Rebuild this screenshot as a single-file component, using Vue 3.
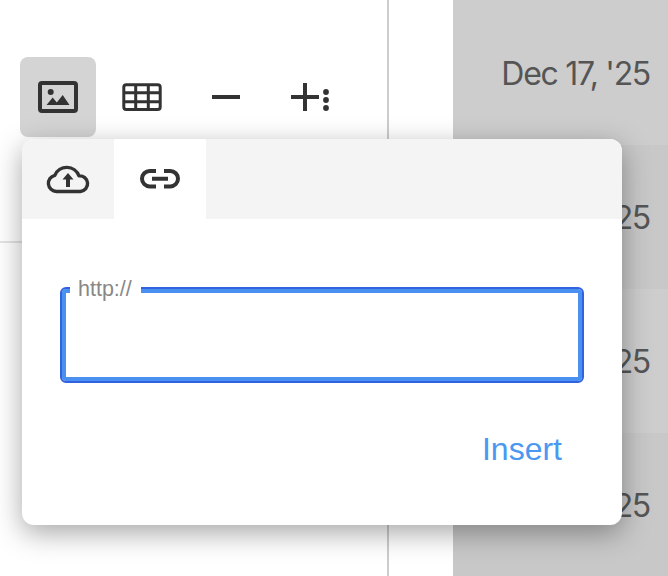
<template>
  <div class="page">
    <div class="main">
      <div class="toolbar">
        <button v-for="tool in tools" :key="tool.id" :class="['tool', { active: tool.id === 'image' }]">
          <svg width="48" height="48" viewBox="0 0 48 48" fill="#333">
            <template v-if="tool.id === 'image'">
              <rect x="6" y="10" width="36" height="28" rx="2" fill="none" stroke="#333" stroke-width="4" />
              <circle cx="16.700" cy="19" r="3" />
              <path d="M12.500 32l6.200-7.500 4.100 5 5.900-7.500 6.800 10z" />
            </template>
            <template v-else-if="tool.id === 'table'">
              <rect x="5.800" y="11.800" width="36.400" height="24.700" rx="2.500" fill="none" stroke="#333" stroke-width="3" />
              <path d="M5.800 19.700h36.400M5.800 28.700h36.400M17.700 11.800v24.700M30.300 11.800v24.700" fill="none" stroke="#333" stroke-width="3" />
            </template>
            <path v-else-if="tool.id === 'rule'" d="M10 22h28v4H10z" />
            <template v-else>
              <path d="M5 22h12V10h4v12h12v4H21v12h-4V26H5z" />
              <circle cx="40" cy="19" r="2.900" />
              <circle cx="40" cy="27" r="2.900" />
              <circle cx="40" cy="35" r="2.900" />
            </template>
          </svg>
        </button>
      </div>
      <div class="divider"></div>
    </div>
    <div class="gutter"></div>
    <div class="dates">
      <div v-for="row in 4" :key="row" class="date">Dec 17, '25</div>
    </div>

    <div class="popup">
      <div class="tabs">
        <div class="tab">
          <svg width="48" height="48" viewBox="0 0 48 48">
            <path d="M12.500 36.500A8.200 8.200 0 0 1 10.800 20.300 13 13 0 0 1 35 20.900 7.800 7.800 0 0 1 36.500 36.500z" fill="none" stroke="#333" stroke-width="3.400" stroke-linejoin="round" />
            <path d="M24 18l5.500 6.500H26V32h-4v-7.500h-3.500z" fill="#333" />
          </svg>
        </div>
        <div class="tab selected">
          <svg width="48" height="48" viewBox="0 0 48 48">
            <path d="M20 16h-6.300a7.700 7.700 0 0 0 0 15.400H20M28 16h6.300a7.700 7.700 0 0 1 0 15.400H28" fill="none" stroke="#333" stroke-width="4" />
            <path d="M16 21.700h16v4H16z" fill="#333" />
          </svg>
        </div>
      </div>
      <div class="body">
        <div class="field">
          <label class="field-label">http://</label>
          <input class="field-input" type="text" />
        </div>
        <div class="actions">
          <span class="insert">Insert</span>
        </div>
      </div>
    </div>
  </div>
</template>

<script setup>
const tools = [
  { id: 'image' },
  { id: 'table' },
  { id: 'rule' },
  { id: 'more' }
]
</script>

<style>
html, body {
  margin: 0;
  background: #fff;
}
</style>

<style scoped>
.page {
  position: relative;
  display: flex;
  width: 668px;
  height: 576px;
  overflow: hidden;
  background: #fff;
  font-family: Inter, "Liberation Sans", sans-serif;
}

.main {
  width: 389px;
  box-sizing: border-box;
  border-right: 2px solid #ccc;
  padding-top: 57px;
}

.toolbar {
  display: flex;
  gap: 8px;
  padding-left: 20px;
}

.tool {
  display: flex;
  align-items: center;
  justify-content: center;
  width: 76px;
  height: 80px;
  padding: 0;
  border: none;
  border-radius: 8px;
  background: transparent;
}

.tool.active {
  background: #d4d4d4;
}

.divider {
  height: 2px;
  margin-top: 104px;
  background: #e4e4e4;
}

.gutter {
  width: 64px;
}

.dates {
  flex: 1;
  display: flex;
  flex-direction: column;
  background: #cdcdcd;
}

.date {
  flex: 0 0 144px;
  box-sizing: border-box;
  display: flex;
  align-items: center;
  justify-content: flex-end;
  padding: 1px 18px 0 0;
  color: #555;
  font-size: 32px;
  letter-spacing: -1.3px;
}

.date:first-child {
  flex-basis: 145px;
}

.date:nth-child(even) {
  background: #c8c8c8;
}

.popup {
  position: absolute;
  left: 22px;
  top: 139px;
  width: 600px;
  height: 386px;
  overflow: hidden;
  border-radius: 12px;
  background: #fff;
  box-shadow: 0 8px 28px rgba(0, 0, 0, 0.35);
}

.tabs {
  display: flex;
  height: 80px;
  background: #f4f4f4;
}

.tab {
  display: flex;
  align-items: center;
  justify-content: center;
  width: 92px;
}

.tab.selected {
  background: #fff;
}

.body {
  padding: 68px 38px 0;
}

.field {
  position: relative;
}

.field-input {
  display: block;
  width: 100%;
  height: 96px;
  box-sizing: border-box;
  border: 2px solid #3162e0;
  border-radius: 6px;
  outline: none;
  box-shadow: inset 0 0 0 4px #4a90f0;
}

.field-label {
  position: absolute;
  left: 10px;
  top: -10px;
  padding: 0 9px 0 8px;
  background: #fff;
  color: #888;
  font-family: "Liberation Sans", sans-serif;
  font-size: 21.500px;
  line-height: 24px;
}

.actions {
  display: flex;
  justify-content: flex-end;
  margin-top: 46px;
  padding-right: 22px;
}

.insert {
  color: #4a98f0;
  font-family: "Liberation Sans", sans-serif;
  font-size: 32px;
  line-height: 40px;
}
</style>
